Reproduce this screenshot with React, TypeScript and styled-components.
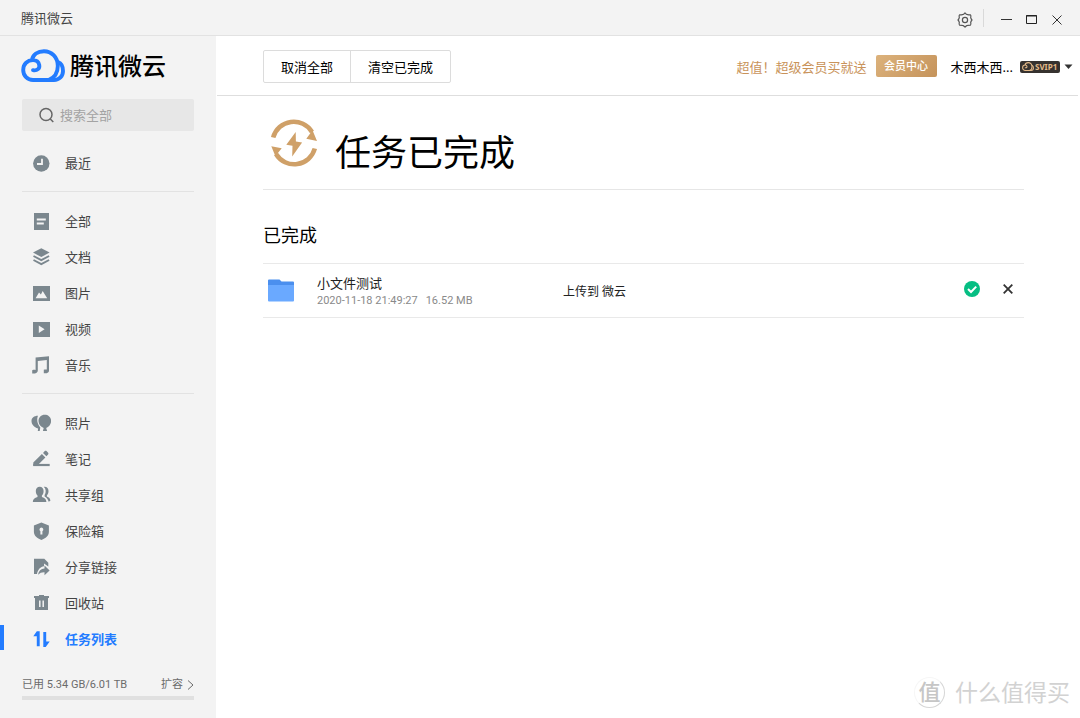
import React from 'react';
import styled, { createGlobalStyle } from 'styled-components';

const GlobalStyle = createGlobalStyle`
  * { box-sizing: border-box; }
  body {
    margin: 0;
    background: #fff;
    color: #000;
    font-family: 'Noto Sans', 'Noto Sans CJK SC', sans-serif;
    font-size: 13px;
    line-height: 20px;
  }
  button, input { font: inherit; color: inherit; }
  button { cursor: pointer; }
  h1, h2, p, ul { margin: 0; padding: 0; font-weight: 400; }
  ul { list-style: none; }
  svg { display: block; flex: none; }
  a { color: inherit; text-decoration: none; }
`;

const Window = styled.div`
  display: flex;
  flex-direction: column;
  min-height: 100vh;
  position: relative;
`;

const TitleBar = styled.header`
  display: flex;
  align-items: center;
  justify-content: space-between;
  height: 36px;
  padding: 0 11px 0 21px;
  background: #f3f3f3;
  border-bottom: 1px solid #e2e2e2;
  color: #444;
`;

const WindowControls = styled.div`
  display: flex;
  align-items: center;
  padding-top: 4px;
`;

const IconButton = styled.button<{ $width?: number }>`
  display: flex;
  align-items: center;
  justify-content: center;
  width: ${p => p.$width ?? 25}px;
  height: 20px;
  padding: 0;
  border: 0;
  background: none;
`;

const ControlDivider = styled.span`
  width: 1px;
  height: 18px;
  margin: 0 10px 4px 8px;
  background: #d9d9d9;
`;

const Body = styled.div`
  display: flex;
  flex: 1;
`;

const Sidebar = styled.aside`
  display: flex;
  flex-direction: column;
  flex: none;
  width: 216px;
  padding: 12px 0 18px;
  background: #f3f3f3;
`;

const Brand = styled.div`
  display: flex;
  align-items: center;
  gap: 5px;
  height: 34px;
  margin: 0 21px;
  font-size: 24px;
  line-height: 34px;
  font-weight: 500;
  span { padding-top: 2px; }
`;

const SearchBox = styled.label`
  display: flex;
  align-items: center;
  gap: 5px;
  height: 32px;
  margin: 17px 22px 14px;
  padding: 0 8px 0 16px;
  border-radius: 2px;
  background: #e7e7e7;
`;

const SearchInput = styled.input`
  flex: 1;
  min-width: 0;
  padding: 0;
  border: 0;
  outline: 0;
  background: none;
  &::placeholder { color: #a3a3a3; opacity: 1; }
`;

const NavGroup = styled.ul`
  & + & {
    position: relative;
    padding-top: 22px;
  }
  & + &::before {
    content: '';
    position: absolute;
    top: 10px;
    left: 22px;
    right: 22px;
    height: 1px;
    background: #e2e2e2;
  }
`;

const NavLink = styled.a<{ $active?: boolean }>`
  display: flex;
  align-items: center;
  gap: 14px;
  height: 36px;
  padding-left: 31px;
  position: relative;
  color: ${p => (p.$active ? '#237cff' : '#444')};
  font-weight: ${p => (p.$active ? 700 : 400)};
  svg { color: ${p => (p.$active ? '#237cff' : '#7b878e')}; }
  &::before {
    content: '';
    display: ${p => (p.$active ? 'block' : 'none')};
    position: absolute;
    left: 0;
    top: 4px;
    width: 4px;
    height: 25px;
    background: #237cff;
  }
`;

const Storage = styled.div`
  margin: auto 22px 0;
  color: #6b6b6b;
  font-family: Roboto, 'Noto Sans CJK SC', sans-serif;
  font-size: 11px;
`;

const StorageRow = styled.div`
  display: flex;
  justify-content: space-between;
  line-height: 22px;
  a { display: flex; align-items: center; gap: 4px; }
`;

const StorageBar = styled.div`
  height: 4px;
  background: #e0e0e0;
`;

const Main = styled.main`
  flex: 1;
  min-width: 0;
`;

const Toolbar = styled.div`
  display: flex;
  align-items: center;
  justify-content: space-between;
  height: 60px;
  margin: 0 2px 0 1px;
  padding: 0 5px 0 46px;
  border-bottom: 1px solid #dedede;
`;

const ButtonGroup = styled.div`
  display: flex;
  height: 33px;
  margin-top: 2px;
  border: 1px solid #dcdcdc;
  border-radius: 2px;
`;

const GroupButton = styled.button`
  padding: 0 17px;
  border: 0;
  background: none;
  & + & { border-left: 1px solid #dcdcdc; }
`;

const Account = styled.div`
  display: flex;
  align-items: center;
  margin-top: 2px;
`;

const Promo = styled.a`
  color: #c9935a;
`;

const MemberButton = styled.button`
  width: 61px;
  height: 22px;
  margin: 0 14px 2px 9px;
  padding: 0;
  border: 0;
  border-radius: 2px;
  background: linear-gradient(135deg, #dcb27c, #c5935b);
  color: #fff;
  font-size: 11px;
  font-weight: 500;
  line-height: 22px;
`;

const UserButton = styled.button`
  display: flex;
  align-items: center;
  padding: 0;
  border: 0;
  background: none;
`;

const Badge = styled.span`
  display: flex;
  align-items: center;
  gap: 1px;
  width: 40px;
  height: 12px;
  margin: 0 4px 0 7px;
  padding-left: 2px;
  border-radius: 2px;
  background: #36322f;
  color: #e3b988;
  font-size: 8px;
  font-weight: 700;
  line-height: 12px;
`;

const Content = styled.div`
  padding: 0 56px 0 47px;
`;

const Hero = styled.div`
  display: flex;
  align-items: center;
  gap: 17px;
  height: 94px;
  padding-left: 7px;
  border-bottom: 1px solid #e6e6e6;
  h1 {
    margin-top: 20px;
    font-size: 36px;
    line-height: 48px;
  }
`;

const SectionTitle = styled.h2`
  padding: 32px 0 15px;
  font-size: 18px;
  line-height: 26px;
`;

const TaskRow = styled.li`
  display: grid;
  grid-template-columns: 26px 233px 1fr auto;
  column-gap: 18px;
  align-items: center;
  height: 55px;
  padding: 0 9px 0 5px;
  border: solid #e9e9e9;
  border-width: 1px 0;
`;

const TaskInfo = styled.div`
  padding: 2px 0 0 5px;
  color: #222;
  line-height: 18px;
`;

const TaskMeta = styled.p`
  display: flex;
  gap: 8px;
  color: #8a8a8a;
  font-family: Roboto, 'Noto Sans CJK SC', sans-serif;
  font-size: 11px;
`;

const TaskTarget = styled.p`
  padding-top: 2px;
  color: #222;
  font-size: 12px;
`;

const TaskActions = styled.div`
  display: flex;
  align-items: center;
  gap: 21px;
  padding-bottom: 4px;
`;

const Watermark = styled.div`
  position: absolute;
  right: 10px;
  bottom: 9px;
  display: flex;
  align-items: center;
  gap: 10px;
  color: #d2d2d2;
  font-size: 23px;
  line-height: 34px;
`;

const Seal = styled.span`
  width: 31px;
  height: 31px;
  border: 1px solid #d6d6d6;
  border-left-color: #f6f6f6;
  border-top-color: #f6f6f6;
  border-radius: 50%;
  color: #c6c6c6;
  font-size: 22px;
  font-weight: 500;
  line-height: 27px;
  text-align: center;
`;

const Glyph = ({ children }: { children: React.ReactNode }) => (
  <svg width="20" height="20" viewBox="0 0 20 20" fill="currentColor" aria-hidden="true">{children}</svg>
);

const icons = {
  recent: <Glyph><circle cx="10.3" cy="10.5" r="8.2" /><path d="M11 5.8V11H6" fill="none" stroke="#f3f3f3" strokeWidth="1.8" /></Glyph>,
  all: <Glyph><path d="M3 2h15v17H3z" /><path d="M5.8 8.5h9M5.8 12.5h7" stroke="#f3f3f3" strokeWidth="1.8" /></Glyph>,
  docs: <Glyph><path d="M10.3 1.2 18.6 5.6 10.3 10 2 5.6z" /><path d="m2.5 9 7.8 4.1L18.1 9M2.5 13l7.8 4.1L18.1 13" fill="none" stroke="currentColor" strokeWidth="1.9" /></Glyph>,
  image: <Glyph><path d="M2 3h17v15H2z" /><path d="M4.6 15.2 8 9.6l1.9 1.9 1.8-3.4 4.5 7.1z" fill="#f3f3f3" /></Glyph>,
  video: <Glyph><path d="M2 3h17v15H2z" /><path d="m7.8 6.6 5.8 3.7-5.8 3.7z" fill="#f3f3f3" /></Glyph>,
  music: <Glyph><path d="M4.6 2.6 18 1.2v14.2c0 2-1.4 3-5.2 2.8v-3.4c1.1-.5 1.900-.5 3-.3V5L6.800 5.900v9.600c0 2.200-1.600 3.200-5.600 3.100v-3.300c1.200-.6 2.200-.6 3.400-.4z" /></Glyph>,
  photo: <Glyph><path d="M13.8 1.800c3.600 0 6.300 2.600 6.300 6.200 0 3.300-2 5.700-4.900 7l.9 3h-4.200l.8-3C9.500 13.700 7.500 11.300 7.500 8c0-3.600 2.700-6.200 6.300-6.200z" /><path d="M7 2.800C5.600 6.300 6 10.800 9.300 14.500l-.6 3.500H6.800l.3-2.400C3 14.200.5 11.600.5 8 .5 5 3 2.800 7 2.800z" /></Glyph>,
  note: <Glyph><path d="M2.300 14.900h16.400v2.200H2.300z" /><path d="M2.300 17.100v-3.600l8.600-8.600 3.500 3.500-7.500 7.500zM12 3.900l1.800-1.800c.5-.5 1.200-.5 1.700 0l1.600 1.700c.5.500.5 1.100 0 1.600l-1.700 1.800z" /></Glyph>,
  group: <Glyph><path d="M8.700 1.700c2.400 0 3.900 1.700 3.900 4.300 0 2-.7 3.600-1.700 4.500v1.600c2.800.9 4.300 2 4.500 5H1.800c.2-3 1.800-4.100 4.700-5v-1.600C5.500 9.600 4.800 8 4.800 6c0-2.600 1.500-4.300 3.900-4.300z" /><path d="M12.800 1.800c3-.4 4.700 1.500 4.700 4.200 0 2-.6 3.500-1.600 4.400v1c2.200.8 3.300 2 3.500 4.300l-1.700 1c-.7-2.200-1.700-3.800-4.100-5.200V9.900c1.700-2.300 1.500-6-.8-8.100z" /></Glyph>,
  safe: <Glyph><path d="m10.400 1.600 7.500 2.900v6.200c0 4-3.300 6.700-7.500 8.200-4.200-1.500-7.500-4.200-7.500-8.200V4.500z" /><path d="M10.400 6.500a2 2 0 0 1 1 3.700v3.200h-2v-3.200a2 2 0 0 1 1-3.700z" fill="#f3f3f3" /></Glyph>,
  share: <Glyph><path d="M3 1.800h10.300l4 4v3.600L13 6.600v2.600c-3.500.6-6.100 3-7 7.800H3z" /><path d="M7 17.800c.6-4 2.900-6.100 6.500-6.300V8.400l5.100 5-5.100 4.900v-3c-2.700-.1-4.600.7-6.500 2.500z" /></Glyph>,
  trash: <Glyph><path d="M3 3h5V2h5v1h5v2h-1v12H4V5H3z" /><path d="M8.800 7.500V14M12.200 7.500V14" stroke="#f3f3f3" strokeWidth="1.500" /></Glyph>,
  tasks: <Glyph><path d="M5.800 2.300h2.900V17.200H5.800V7.300H2.300zM12.300 3h2.900v9.600h3.500L14.700 18h-2.400z" /></Glyph>,
};

const groups: { icon: keyof typeof icons; label: string }[][] = [
  [{ icon: 'recent', label: '最近' }],
  [
    { icon: 'all', label: '全部' },
    { icon: 'docs', label: '文档' },
    { icon: 'image', label: '图片' },
    { icon: 'video', label: '视频' },
    { icon: 'music', label: '音乐' },
  ],
  [
    { icon: 'photo', label: '照片' },
    { icon: 'note', label: '笔记' },
    { icon: 'group', label: '共享组' },
    { icon: 'safe', label: '保险箱' },
    { icon: 'share', label: '分享链接' },
    { icon: 'trash', label: '回收站' },
    { icon: 'tasks', label: '任务列表' },
  ],
];

const CloudLogo = ({ width, height, color }: { width: number; height: number; color: string }) => (
  <svg width={width} height={height} viewBox="0 0 44 33" fill="none" stroke={color} strokeWidth="3.900" strokeLinecap="round" aria-hidden="true">
    <path d="M12 21.200c4.200.8 7-1.800 6.200-5.400-.6-3-3.100-4.700-6.200-4.700-5.800 0-9.800 4.300-9.800 9.900C2.200 26.700 6.500 31 12 31h15.500c6-2.200 9.300-7.500 9.300-14C36.800 8 30.300 2.200 23 2.200c-6.300 0-11 3.600-12.200 9" />
    <path d="M37 13c3.500 1.300 5 5 5 9 0 5.300-3.700 9-9 9h-5.500" />
  </svg>
);

export default function App() {
  return (
    <Window>
      <GlobalStyle />
      <TitleBar>
        <span>腾讯微云</span>
        <WindowControls>
          <IconButton aria-label="设置" $width={20}>
            <svg width="16" height="16" viewBox="0 0 16 16" fill="none" stroke="#555" strokeWidth="1.200" strokeLinejoin="round">
              <path d="M5.400 2.700Q6.700 2.700 8 .9q1.300 1.800 2.600 1.800 1 .2 2.900.2.700.6.200 2.800.3 1.300 1.300 2.300-1 1-1.300 2.300.5 2.200-.2 2.800-1.900 0-2.900.2-1.300 0-2.600 1.800-1.300-1.800-2.600-1.800-1-.2-2.900-.2-.7-.6-.2-2.800Q2 9 1 8q1-1 1.300-2.300-.5-2.200.2-2.800 1.900 0 2.900-.2z" />
              <circle cx="8" cy="8" r="2.600" />
            </svg>
          </IconButton>
          <ControlDivider />
          <IconButton aria-label="最小化">
            <svg width="11" height="11" viewBox="0 0 11 11"><path d="M0 5.500h11" stroke="#333" /></svg>
          </IconButton>
          <IconButton aria-label="最大化">
            <svg width="12" height="10" viewBox="0 0 12 10" fill="none" stroke="#222"><path d="M.5.5h10v8H.5zM0 1h11" /></svg>
          </IconButton>
          <IconButton aria-label="关闭">
            <svg width="10" height="10" viewBox="0 0 10 10"><path d="m.5.500 9 9m0-9-9 9" stroke="#333" /></svg>
          </IconButton>
        </WindowControls>
      </TitleBar>
      <Body>
        <Sidebar>
          <Brand>
            <CloudLogo width={44} height={33} color="#237cff" />
            <span>腾讯微云</span>
          </Brand>
          <SearchBox>
            <svg width="17" height="17" viewBox="0 0 17 17" fill="none" stroke="#666" strokeWidth="1.500">
              <circle cx="8" cy="7.500" r="6" /><path d="m12.300 12 3 3" />
            </svg>
            <SearchInput type="text" placeholder="搜索全部" aria-label="搜索全部" />
          </SearchBox>
          <nav>
            {groups.map((items, i) => (
              <NavGroup key={i}>
                {items.map(({ icon, label }) => (
                  <li key={icon}>
                    <NavLink href={`#${icon}`} $active={icon === 'tasks'}>
                      {icons[icon]}
                      {label}
                    </NavLink>
                  </li>
                ))}
              </NavGroup>
            ))}
          </nav>
          <Storage>
            <StorageRow>
              <span>已用 5.34 GB/6.01 TB</span>
              <a href="#expand">
                扩容
                <svg width="7" height="10" viewBox="0 0 7 10" fill="none" stroke="#6b6b6b"><path d="m1 .5 5 4.500-5 4.500" /></svg>
              </a>
            </StorageRow>
            <StorageBar />
          </Storage>
        </Sidebar>
        <Main>
          <Toolbar>
            <ButtonGroup>
              <GroupButton>取消全部</GroupButton>
              <GroupButton>清空已完成</GroupButton>
            </ButtonGroup>
            <Account>
              <Promo href="#promo">超值！超级会员买就送</Promo>
              <MemberButton>会员中心</MemberButton>
              <UserButton>
                木西木西...
                <Badge>
                  <CloudLogo width={12} height={9} color="#e3b988" />
                  SVIP1
                </Badge>
                <svg width="9" height="5" viewBox="0 0 9 5"><path d="M.5.500h8L4.500 5z" fill="#333" /></svg>
              </UserButton>
            </Account>
          </Toolbar>
          <Content>
            <Hero>
              <svg width="48" height="48" viewBox="0 0 48 48" fill="#cfa068" aria-hidden="true">
                <path d="M3.200 18.500A21.300 21.300 0 0 1 42 13M44.800 29.500A21.300 21.300 0 0 1 6 35" fill="none" stroke="#cfa068" strokeWidth="4.600" />
                <path d="m42.500 11.300 4.500 10.700-10.700-2.300zM1.300 27.300l10.400 2-6.300 8zM25.700 13 16.300 25.800l6.200.9-.3 10.700 9.900-14-6.200-1z" />
              </svg>
              <h1>任务已完成</h1>
            </Hero>
            <SectionTitle>已完成</SectionTitle>
            <ul>
              <TaskRow>
                <svg width="26" height="23" viewBox="0 0 26 23" aria-hidden="true">
                  <path d="M0 1.500Q0 .5 1 .5h10.500l2 2H25q1 0 1 1V7H0z" fill="#4b8fee" />
                  <path d="M0 6h26v15.500q0 1-1 1H1q-1 0-1-1z" fill="#6aa9ff" />
                </svg>
                <TaskInfo>
                  <p>小文件测试</p>
                  <TaskMeta>
                    <span>2020-11-18 21:49:27</span>
                    <span>16.52 MB</span>
                  </TaskMeta>
                </TaskInfo>
                <TaskTarget>上传到 微云</TaskTarget>
                <TaskActions>
                  <svg width="16" height="16" viewBox="0 0 16 16" role="img" aria-label="完成">
                    <circle cx="8" cy="8" r="8" fill="#06be83" />
                    <path d="m4 8 3 3 5.200-5.400" fill="none" stroke="#fff" strokeWidth="2" />
                  </svg>
                  <IconButton aria-label="删除" $width={14}>
                    <svg width="10" height="10" viewBox="0 0 10 10"><path d="m.7.700 8.600 8.600m0-8.600L.7 9.300" stroke="#333" strokeWidth="1.800" /></svg>
                  </IconButton>
                </TaskActions>
              </TaskRow>
            </ul>
          </Content>
        </Main>
      </Body>
      <Watermark>
        <Seal>值</Seal>
        <span>什么值得买</span>
      </Watermark>
    </Window>
  );
}
